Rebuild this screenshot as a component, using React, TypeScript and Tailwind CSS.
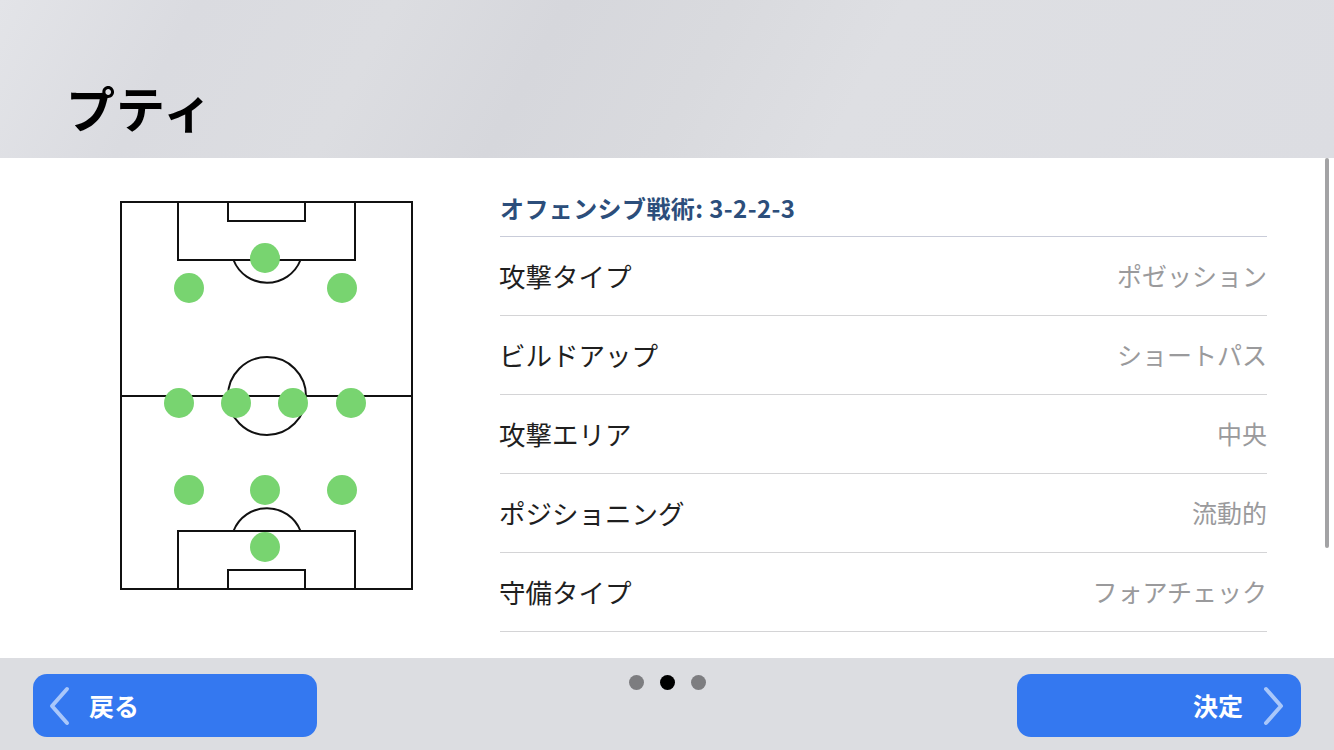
import React from "react"

const FONT = { fontFamily: '"Noto Sans CJK JP", "Noto Sans", sans-serif' }

const rows: { label: string; value: string }[] = [
  { label: "攻撃タイプ", value: "ポゼッション" },
  { label: "ビルドアップ", value: "ショートパス" },
  { label: "攻撃エリア", value: "中央" },
  { label: "ポジショニング", value: "流動的" },
  { label: "守備タイプ", value: "フォアチェック" },
]

// player positions, pitch coords (origin = pitch top-left)
const players: [number, number][] = [
  [144, 56],
  [68, 86],
  [221, 86],
  [58, 201],
  [115, 201],
  [172, 201],
  [230, 201],
  [68, 288],
  [144, 288],
  [221, 288],
  [144, 345],
]

const Pitch = () => (
  <svg width="294" height="390" viewBox="-1 -1 294 390">
    <g fill="none" stroke="#111" strokeWidth="2">
      <rect x="0" y="0" width="291" height="387" />
      <line x1="0" y1="194" x2="291" y2="194" />
      <circle cx="146" cy="194" r="39" />
      {/* top */}
      <rect x="57" y="0" width="177" height="58" />
      <rect x="107" y="0" width="77" height="19" />
      <path d="M 112.5 58 A 36 36 0 0 0 179.5 58" />
      {/* bottom */}
      <rect x="57" y="329" width="177" height="58" />
      <rect x="107" y="368" width="77" height="19" />
      <path d="M 112.5 329 A 36 36 0 0 1 179.5 329" />
    </g>
    {players.map(([x, y], i) => (
      <circle key={i} cx={x} cy={y} r="15" fill="#78d470" />
    ))}
  </svg>
)

const Chevron = ({ dir }: { dir: "left" | "right" }) => (
  <svg width="24" height="40" viewBox="0 0 24 40">
    <polyline
      points={dir === "left" ? "19,3 4,20 19,37" : "5,3 20,20 5,37"}
      fill="none"
      stroke="#a9c7fa"
      strokeWidth="4"
      strokeLinecap="round"
      strokeLinejoin="round"
    />
  </svg>
)

export default function App() {
  return (
    <div className="flex flex-col w-[1334px] h-[750px] overflow-hidden" style={FONT}>
      <div className="h-[158px] shrink-0 bg-[linear-gradient(118deg,#e3e4e8_0%,#dadbe0_14%,#dcdde1_28%,#d6d7dc_40%,#d9dade_52%,#dedfe3_64%,#dcdde2_100%)] flex items-end pl-[66px] pb-[27px]">
        <h1 className="text-[49px] font-bold text-black leading-none tracking-[1px]">プティ</h1>
      </div>

      <div className="h-[500px] shrink-0 bg-white flex">
        <div className="pl-[120px] pt-[43px] w-[500px] shrink-0">
          <Pitch />
        </div>
        <div className="w-[767px] shrink-0 pt-[35px]">
          <div className="border-b border-[#c9ccd9] pb-[13px]">
            <span className="text-[24px] font-bold text-[#2c4e7b] leading-[30px] tracking-[0.4px]">
              オフェンシブ戦術: 3-2-2-3
            </span>
          </div>
          {rows.map((r) => (
            <div
              key={r.label}
              className="h-[79px] flex items-center justify-between border-b border-[#d4d4d6]"
            >
              <span className="text-[26.5px] text-[#1f1f1f] -ml-[1px]">{r.label}</span>
              <span className="text-[25px] text-[#9a9a9c]">{r.value}</span>
            </div>
          ))}
        </div>
        <div className="ml-auto mr-[5px] w-[4px] h-[390px] bg-[#a3a3a5] rounded-sm" />
      </div>

      <div className="flex-1 bg-[#dcdde1] grid grid-cols-[284px_1fr_284px] px-[33px] pt-[16px]">
        <button className="h-[63px] rounded-[14px] bg-[#3478f0] flex items-center pl-[15px] gap-[17px]">
          <Chevron dir="left" />
          <span className="text-white text-[25px] font-bold">戻る</span>
        </button>
        <div className="flex justify-center gap-[16px] pt-[1px]">
          <span className="w-[15px] h-[15px] rounded-full bg-[#7d7d80]" />
          <span className="w-[15px] h-[15px] rounded-full bg-black" />
          <span className="w-[15px] h-[15px] rounded-full bg-[#7d7d80]" />
        </div>
        <button className="h-[63px] rounded-[14px] bg-[#3478f0] flex items-center justify-end pr-[16px] gap-[18px]">
          <span className="text-white text-[25px] font-bold">決定</span>
          <Chevron dir="right" />
        </button>
      </div>
    </div>
  )
}
